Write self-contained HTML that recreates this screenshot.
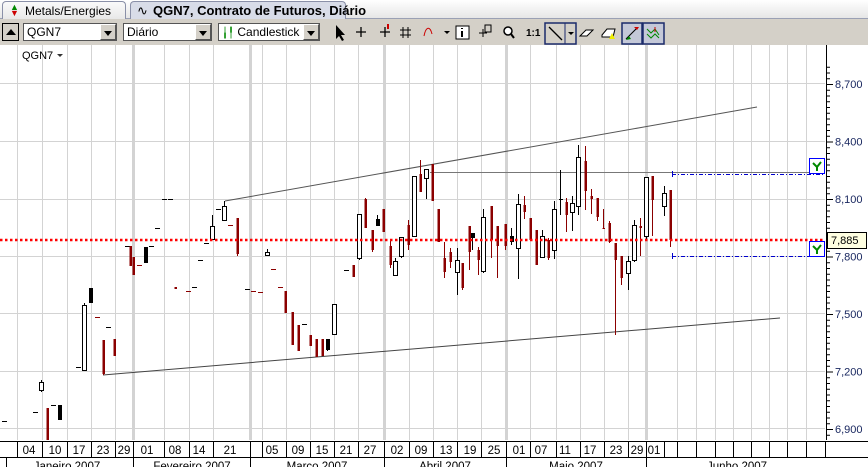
<!DOCTYPE html>
<html><head><meta charset="utf-8"><style>
*{margin:0;padding:0;box-sizing:border-box}
body{width:868px;height:467px;overflow:hidden;background:#fff;font-family:"Liberation Sans",sans-serif;font-size:12px;position:relative}
.tabs{position:absolute;left:0;top:0;width:868px;height:19px;background:linear-gradient(#fff,#e6e6e6);border-bottom:1px solid #9aa0b4}
.tab{position:absolute;top:1px;height:18px;border:1px solid #8a90a8;border-bottom:none;border-radius:4px 4px 0 0;padding:2px 6px 0 22px;font-size:12px;color:#000;white-space:nowrap}
.tb{position:absolute;left:0;top:19px;width:868px;height:26px;background:#d4d0c8}
.sel{position:absolute;top:4px;height:18px;background:#fff;border:1px solid #555;font-size:12px;padding:1px 3px;white-space:nowrap}
.dd{position:absolute;right:0;top:0;width:16px;height:16px;background:#d4d0c8;border:1px solid #fff;border-right-color:#555;border-bottom-color:#555}
.dd:after{content:"";position:absolute;left:3px;top:6px;border:4px solid transparent;border-top:5px solid #000;border-bottom:none}
</style></head><body>
<div class="tabs">
 <div class="tab" style="left:2px;width:124px;background:linear-gradient(#fafafa,#e8e8e8)"><span style="position:absolute;left:7px;top:2px;font-size:9px;line-height:6px"><span style="color:#080">▲</span><br><span style="color:#c00">▼</span></span>Metals/Energies</div>
 <div class="tab" style="left:130px;width:216px;background:#d8dce8;font-weight:bold;font-size:13px;padding-top:1px"><span style="position:absolute;left:6px;top:1px;font-weight:normal">∿</span>QGN7, Contrato de Futuros, Diário</div>
</div>
<div class="tb">
 <div style="position:absolute;left:2px;top:4px;width:17px;height:18px;border:1px solid #000;background:#d4d0c8"><div style="position:absolute;left:3px;top:5px;border:5px solid transparent;border-bottom:6px solid #000;border-top:none"></div></div>
 <div class="sel" style="left:23px;width:94px">QGN7<div class="dd"></div></div>
 <div class="sel" style="left:123px;width:89px">Diário<div class="dd"></div></div>
 <div class="sel" style="left:218px;width:102px"><span style="color:#080;font-size:10px">╽╿</span> Candlestick<div class="dd"></div></div>
 <svg style="position:absolute;left:330px;top:0" width="340" height="26">
  <path d="M6 6 L6 20 L9 17 L12 22 L14 21 L11 16 L15 16 Z" fill="#000"/>
  <path d="M26 13h10M31 8v10M50 13h10M55 8v10" stroke="#000" stroke-width="1.3"/><rect x="57" y="5" width="2" height="5" fill="#c00"/>
  <path d="M73 8v11M78 8v11M70 11h11M70 16h11" stroke="#000"/>
  <path d="M94 17 C96 7 100 7 102 15" stroke="#c00" fill="none"/><path d="M114 12l3 3 3-3z" fill="#000"/>
  <rect x="126" y="7" width="13" height="13" fill="#fff" stroke="#000"/><path d="M132 9v1M132 12v6" stroke="#000" stroke-width="2"/>
  <path d="M149 14h8M153 10v8" stroke="#000"/><rect x="155" y="6" width="6" height="7" fill="none" stroke="#000"/>
  <circle cx="178" cy="12" r="4" fill="#fff" stroke="#000" stroke-width="1.5"/><path d="M181 15l3 4" stroke="#000" stroke-width="2"/>
  <text x="196" y="17" font-size="10" font-weight="bold" font-family="Liberation Sans">1:1</text>
  <rect x="215" y="4" width="31" height="21" fill="none" stroke="#1b2a6b" stroke-width="1.5"/><path d="M235 4v21" stroke="#1b2a6b"/>
  <path d="M219 8l13 13" stroke="#000" stroke-width="1.3"/><path d="M238 13l3 3 3-3z" fill="#000"/>
  <path d="M250 17l6-6h7l-6 6z" fill="#fff" stroke="#000"/>
  <path d="M272 16l5-6h8l-2 8h-11z" fill="#fff" stroke="#000"/><path d="M279 20l3-6 3 6z" fill="#ee0"/>
  <rect x="292" y="4" width="20" height="21" fill="#c4c8d8" stroke="#1b2a6b" stroke-width="1.5"/><path d="M296 20l11-11" stroke="#000"/><path d="M296 21l3-4 2 3z" fill="#080"/><path d="M304 8h5l-2 3z" fill="#c00"/>
  <rect x="313" y="4" width="21" height="21" fill="#c4c8d8" stroke="#1b2a6b" stroke-width="1.5"/><path d="M317 10l4 4 4-4 4 6M317 15l4 4 4-4 4 4" stroke="#080" fill="none"/><path d="M325 8v5" stroke="#c00"/>
 </svg>
</div>
<svg id="c" style="position:absolute;left:0;top:45px" width="868" height="422" font-family="Liberation Sans" font-size="11"></svg>
<script>
var s='',O=45;function Y(y){return y-O}
var gx=[17,42,67,91,115,133,164,189,213,250,262,286,310,334,358,384,409,433,457,481,506,530,556,580,604,628,646,677,696,715,733,751,769,787,806];
var thick={133:1,250:1,384:1,506:1,646:1};
gx.forEach(function(x){s+='<line x1="'+(x+.5)+'" y1="0" x2="'+(x+.5)+'" y2="395" stroke="#d3d3d3" stroke-width="'+(thick[x]?3:1)+'"/>'});
[83,141,199,256,313,371,428].forEach(function(y){s+='<line x1="0" y1="'+(Y(y)+.5)+'" x2="825" y2="'+(Y(y)+.5)+'" stroke="#d3d3d3"/>'});
s+='<text x="22" y="'+Y(59)+'" font-size="11">QGN7</text><path d="M57 '+Y(54)+'l3 3 3-3z" fill="#333"/>';
s+='<line x1="225" y1="'+Y(201)+'" x2="757" y2="'+Y(107)+'" stroke="#555"/>';
s+='<line x1="103" y1="'+Y(375)+'" x2="780" y2="'+Y(318)+'" stroke="#444"/>';
s+='<line x1="430" y1="'+Y(172.5)+'" x2="825" y2="'+Y(172.5)+'" stroke="#777"/>';
var C=[[4,421,421,421,421,'b'],[35,412,412,412,412,'b'],[41,382,390,380,392,'h'],[47,408,440,408,440,'r'],[53,405,405,405,405,'b'],[59,405,420,405,420,'b'],[78,367,367,367,367,'b'],[84,305,370,303,370,'h'],[90,288,303,288,303,'b'],[97,317,317,317,317,'r'],[103,340,374,340,375,'r'],[108,327,327,327,327,'b'],[114,339,356,339,356,'r'],[127,246,246,246,246,'b'],[130,246,266,246,266,'r'],[133,257,275,257,275,'r'],[139,265,265,265,265,'r'],[145,247,263,247,263,'b'],[151,246,246,246,246,'b'],[157,228,228,228,228,'b'],[164,199,199,199,199,'b'],[170,199,199,199,199,'b'],[175,287,289,287,289,'r'],[188,291,291,291,291,'r'],[194,287,287,287,287,'b'],[200,260,260,260,260,'b'],[206,243,243,243,243,'b'],[212,226,239,215,239,'h'],[218,209,209,209,209,'b'],[224,206,220,201,220,'h'],[230,225,225,225,225,'r'],[237,218,254,218,256,'r'],[247,289,289,289,289,'b'],[253,291,291,291,291,'r'],[260,292,292,292,292,'r'],[267,252,255,249,255,'h'],[273,269,269,269,269,'r'],[280,287,287,287,287,'r'],[285,291,313,291,313,'r'],[292,312,345,312,345,'r'],[298,325,351,325,351,'r'],[304,324,324,324,324,'b'],[310,335,346,335,346,'r'],[316,339,357,339,357,'r'],[322,339,356,339,356,'r'],[327,339,350,339,351,'b'],[334,304,334,304,334,'h'],[346,270,270,270,270,'b'],[353,265,277,265,277,'r'],[359,214,258,214,260,'h'],[365,199,228,198,228,'r'],[372,230,250,230,252,'r'],[377,219,226,215,226,'b'],[383,209,232,209,232,'r'],[390,246,265,240,268,'r'],[395,261,275,258,276,'h'],[401,237,256,237,258,'h'],[408,225,245,220,250,'r'],[414,176,236,176,236,'h'],[420,174,192,160,192,'r'],[426,169,178,169,199,'h'],[432,164,201,164,201,'r'],[438,209,242,209,242,'r'],[444,258,272,242,278,'r'],[450,252,262,248,268,'r'],[457,260,272,248,295,'h'],[462,263,288,263,290,'r'],[469,226,252,226,270,'r'],[472,233,238,233,250,'b'],[478,250,260,247,275,'r'],[483,217,271,209,273,'h'],[491,206,240,206,258,'r'],[497,226,246,226,278,'r'],[505,224,246,228,250,'r'],[511,236,242,228,245,'b'],[518,204,248,194,279,'h'],[524,205,212,196,219,'r'],[530,218,240,218,240,'r'],[536,230,265,230,265,'r'],[542,236,257,230,258,'h'],[548,240,258,238,260,'r'],[554,209,250,201,259,'h'],[560,199,200,170,215,'b'],[566,202,215,198,232,'r'],[572,203,212,196,231,'h'],[578,157,206,145,215,'h'],[585,161,191,146,210,'r'],[591,196,199,189,214,'r'],[597,198,217,198,221,'r'],[603,228,228,209,229,'r'],[609,223,242,221,243,'r'],[615,243,260,243,335,'r'],[621,256,278,256,285,'r'],[628,261,273,256,290,'h'],[634,225,260,220,262,'h'],[640,226,228,218,256,'r'],[646,177,236,177,240,'h'],[652,176,200,176,236,'r'],[664,193,206,186,216,'h'],[670,190,240,190,247,'r']];
C.forEach(function(c){var x=c[0],col=c[5]=='r'?'#8b0000':'#000';
 s+='<line x1="'+(x+.5)+'" y1="'+Y(c[3])+'" x2="'+(x+.5)+'" y2="'+Y(c[4])+'" stroke="'+col+'"/>';
 var h=Math.max(c[2]-c[1],1);
 if(c[1]==c[2]&&c[3]==c[4]){s+='<rect x="'+(x-2)+'" y="'+Y(c[1])+'" width="5" height="1" fill="'+col+'"/>';return}
 if(c[5]=='h')s+='<rect x="'+(x-1.5)+'" y="'+(Y(c[1])+.5)+'" width="4" height="'+h+'" fill="#fff" stroke="#000"/>';
 else if(c[5]=='r')s+='<rect x="'+(x-0.5)+'" y="'+Y(c[1])+'" width="2.5" height="'+h+'" fill="'+col+'"/>';
 else s+='<rect x="'+(x-1)+'" y="'+Y(c[1])+'" width="4" height="'+h+'" fill="'+col+'"/>';});
s+='<line x1="0" y1="'+Y(240)+'" x2="825" y2="'+Y(240)+'" stroke="#f00" stroke-width="2.5" stroke-dasharray="2.5,2.5"/>';
[174,256].forEach(function(y){s+='<line x1="672" y1="'+(Y(y)+.5)+'" x2="825" y2="'+(Y(y)+.5)+'" stroke="#00c" stroke-dasharray="4,2,1,2"/><line x1="672.5" y1="'+(Y(y)-3)+'" x2="672.5" y2="'+(Y(y)+3)+'" stroke="#00c"/>'});
[158,241].forEach(function(y){s+='<rect x="809.5" y="'+(Y(y)+.5)+'" width="15" height="15" fill="#fff" stroke="#00f"/><path d="M813 '+(Y(y)+5)+'l4 4 4-5M817 '+(Y(y)+9)+'v4" stroke="#080" stroke-width="2" fill="none"/>'});
s+='<line x1="826.5" y1="0" x2="826.5" y2="395" stroke="#000"/>';
for(var p=6870;p<=8790;p+=30){var y=Y(199-(p-8100)*0.19167);if(y<0||y>395)continue;var mj=(p%300==0);s+='<line x1="826" y1="'+(y+.5)+'" x2="'+(mj?833:830)+'" y2="'+(y+.5)+'" stroke="#000"/>';if(mj)s+='<text x="835" y="'+(y+4)+'" fill="#1a2860">'+(p/1000).toFixed(3).replace('.',',')+'</text>'}
s+='<rect x="827.5" y="'+(Y(232)+.5)+'" width="39" height="16" fill="#ffffe1" stroke="#000"/><text x="831" y="'+Y(244)+'" fill="#000">7,885</text>';
s+='<line x1="0" y1="'+Y(441.5)+'" x2="868" y2="'+Y(441.5)+'" stroke="#000"/><line x1="0" y1="'+Y(457.5)+'" x2="868" y2="'+Y(457.5)+'" stroke="#000"/>';
var D=[[29,'04'],[55,'10'],[79,'17'],[103,'23'],[124,'29'],[147,'01'],[175,'08'],[199,'14'],[230,'21'],[272,'05'],[298,'09'],[322,'15'],[346,'21'],[370,'27'],[397,'02'],[421,'09'],[446,'13'],[470,'19'],[494,'25'],[519,'01'],[541,'07'],[565,'11'],[590,'17'],[616,'23'],[637,'29'],[654,'01']];
var dl=[17,42,67,91,115,133,164,189,213,250,262,286,310,334,358,384,409,433,457,481,506,530,556,580,604,628,646,664,677,696,715,733,751,769,787,806,825];
dl.forEach(function(x){s+='<line x1="'+(x+.5)+'" y1="'+Y(441)+'" x2="'+(x+.5)+'" y2="'+Y(457)+'" stroke="#000"/>'});
D.forEach(function(d){s+='<text x="'+d[0]+'" y="'+Y(454)+'" text-anchor="middle" font-size="11.5">'+d[1]+'</text>'});
[[6,'Janeiro 2007',67],[133,'Fevereiro 2007',192],[384,'Abril 2007',445],[506,'Maio 2007',576],[646,'Junho 2007',737],[250,'Março 2007',317]].forEach(function(m){s+='<line x1="'+(m[0]+.5)+'" y1="'+Y(458)+'" x2="'+(m[0]+.5)+'" y2="'+Y(467)+'" stroke="#000"/><text x="'+m[2]+'" y="'+Y(470)+'" text-anchor="middle" font-size="11.5">'+m[1]+'</text>'});
document.getElementById('c').innerHTML=s;
</script>
</body></html>
